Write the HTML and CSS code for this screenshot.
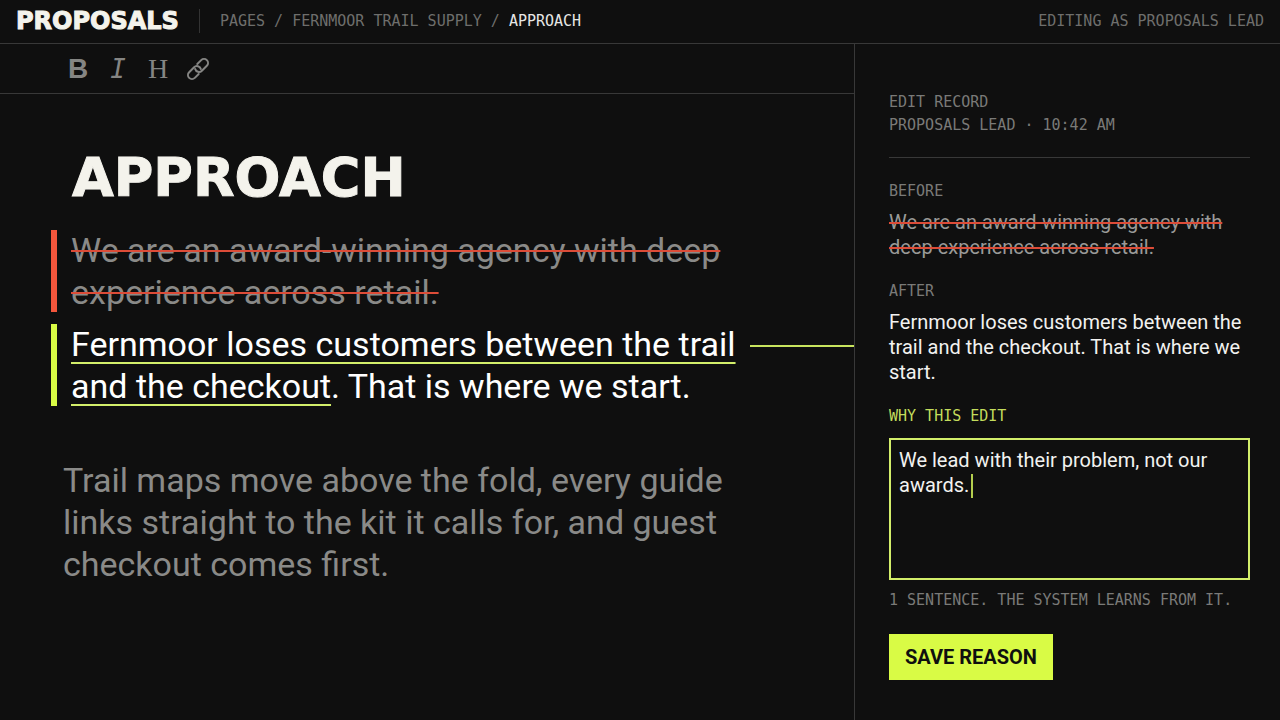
FILE: index.html
```html
<!DOCTYPE html>
<html lang="en">

<head>
    <meta charset="UTF-8">
    <meta name="viewport" content="width=device-width, initial-scale=1.0">
    <title>Proposals - Approach</title>

    <link rel="stylesheet" href="styles.css">
</head>

<body>
    <header class="topbar">
        <div class="brand">PROPOSALS</div>
        <nav class="crumbs">
            <a href="#">PAGES</a> / <a href="#">FERNMOOR TRAIL SUPPLY</a> / <a href="#" class="current">APPROACH</a>
        </nav>
        <div class="role">EDITING AS PROPOSALS LEAD</div>
    </header>

    <div class="workspace">
        <main class="editor">
            <div class="toolbar">
                <button type="button" class="tool bold" aria-label="Bold">B</button>
                <button type="button" class="tool italic" aria-label="Italic">I</button>
                <button type="button" class="tool heading" aria-label="Heading">H</button>
                <button type="button" class="tool" aria-label="Link">
                    <svg width="24" height="24" viewBox="0 0 24 24" fill="none" stroke="currentColor" stroke-width="2" stroke-linecap="round">
                        <g transform="rotate(-45 12 12)">
                            <path d="M9 16H3.500a4 4 0 0 1 0-8h7a4 4 0 0 1 3.500 6"/>
                            <path d="M15 8h5.500a4 4 0 0 1 0 8h-7a4 4 0 0 1-3.500-6"/>
                        </g>
                    </svg>
                </button>
            </div>

            <article class="page">
                <h1>APPROACH</h1>
                <div class="change removed">
                    <p><del>We are an award-winning agency with deep experience across retail.</del></p>
                </div>
                <div class="change added">
                    <p><ins>Fernmoor loses customers between the trail and the checkout</ins>. That is where we start.</p>
                    <span class="connector"></span>
                </div>
                <p class="rest">Trail maps move above the fold, every guide links straight to the kit it calls for, and guest checkout comes first.</p>
            </article>
        </main>

        <aside class="record">
            <div class="record-head">
                <div>EDIT RECORD</div>
                <div>PROPOSALS LEAD · 10:42 AM</div>
            </div>

            <h2>BEFORE</h2>
            <p class="before"><del>We are an award-winning agency with deep experience across retail.</del></p>

            <h2>AFTER</h2>
            <p class="after">Fernmoor loses customers between the trail and the checkout. That is where we start.</p>

            <form>
                <label for="reason">WHY THIS EDIT</label>
                <div class="reason-box">
                    <textarea id="reason" spellcheck="false">We lead with their problem, not our awards.</textarea>
                    <span class="caret"></span>
                </div>
                <div class="hint">1 SENTENCE. THE SYSTEM LEARNS FROM IT.</div>
                <button type="button" class="save">SAVE REASON</button>
            </form>
        </aside>
    </div>
</body>

</html>
```

FILE: styles.css
```css
* {
    box-sizing: border-box;
}

body {
    margin: 0;
    min-height: 100vh;
    display: flex;
    flex-direction: column;
    background-color: #0f0f0f;
    color: #f2f2f0;
    font-family: Roboto, sans-serif;
}

p,
h1,
h2 {
    margin: 0;
}

/* ==== top bar ==== */

.topbar {
    display: flex;
    align-items: center;
    height: 44px;
    padding: 0 16px 2px;
    border-bottom: 1px solid #383838;
    font-family: "DejaVu Sans Mono", monospace;
    font-size: 15px;
    color: #6e6e6c;
}

.brand {
    padding-right: 20px;
    border-right: 1px solid #333;
    font-family: "DejaVu Sans", sans-serif;
    font-size: 24px;
    font-weight: 700;
    line-height: 24px;
    color: #f4f3ec;
    -webkit-text-stroke: 1px #f4f3ec;
}

.crumbs {
    margin-left: 20px;
}

.crumbs a {
    color: inherit;
    text-decoration: none;
}

.crumbs .current {
    color: #e6e6e4;
}

.role {
    margin-left: auto;
}

/* ==== editor ==== */

.workspace {
    flex: 1;
    display: grid;
    grid-template-columns: minmax(0, 1fr) 426px;
}

.toolbar {
    display: flex;
    align-items: center;
    gap: 16px;
    height: 50px;
    padding-left: 66px;
    border-bottom: 1px solid #383838;
}

.tool {
    display: flex;
    align-items: center;
    justify-content: center;
    width: 24px;
    height: 32px;
    padding: 0;
    border: none;
    background: none;
    color: #858583;
    font-size: 28px;
    line-height: 32px;
    cursor: pointer;
}

.bold {
    font-family: "Liberation Sans", sans-serif;
    font-weight: 700;
}

.italic {
    font-family: "DejaVu Sans Mono", monospace;
    font-size: 26px;
    font-style: italic;
}

.heading {
    font-family: "Liberation Serif", serif;
}

.page {
    padding: 52px 0 40px 51px;
    font-size: 34px;
    line-height: 42px;
}

h1 {
    margin-bottom: 19px;
    padding-left: 21px;
    font-family: "DejaVu Sans", sans-serif;
    font-size: 54px;
    font-weight: 700;
    line-height: 64px;
    color: #f4f3ec;
    -webkit-text-stroke: 1px #f4f3ec;
}

.change {
    display: flex;
    position: relative;
    margin-bottom: 10px;
    padding-left: 20px;
}

.change::before {
    content: "";
    position: absolute;
    top: 1px;
    bottom: 1px;
    left: 0;
    width: 6px;
}

.change p {
    max-width: 679px;
}

.removed {
    color: #8a8a88;
}

.removed::before {
    background-color: #f4563c;
}

.added {
    color: #fff;
}

.added::before {
    background-color: #d9fb45;
}

del {
    text-decoration: line-through 2px #dc4c38;
}

ins {
    text-decoration: underline 2px #d3ee6a;
    text-underline-offset: 6px;
    text-decoration-skip-ink: none;
}

.connector {
    flex: 1;
    height: 2px;
    margin-top: 22px;
    background-color: #c8e45e;
}

.rest {
    max-width: 700px;
    margin-top: 52px;
    padding-left: 12px;
    color: #8a8a88;
}

/* ==== edit record ==== */

.record {
    padding: 47px 30px 40px 34px;
    border-left: 1px solid #383838;
    font-size: 20px;
    line-height: 25px;
}

.record-head,
.record h2,
.record label,
.hint {
    font-family: "DejaVu Sans Mono", monospace;
    font-size: 15px;
    font-weight: 400;
    line-height: 23px;
    color: #7a7a78;
}

.record-head {
    margin-bottom: 22px;
    padding-bottom: 20px;
    border-bottom: 1px solid #383838;
}

.record h2 {
    margin-bottom: 7px;
}

.before {
    margin-bottom: 20px;
    color: #9a9a98;
}

.after {
    margin-bottom: 20px;
}

.record label {
    display: block;
    margin-bottom: 10px;
    color: #c3dc5c;
}

.reason-box {
    position: relative;
}

textarea {
    display: block;
    width: 100%;
    height: 142px;
    padding: 8px;
    border: 2px solid #d3ee6a;
    border-radius: 0;
    outline: none;
    resize: none;
    background: none;
    color: #f2f2f0;
    font: inherit;
}

/* sits after the last word typed */
.caret {
    position: absolute;
    top: 36px;
    left: 82px;
    width: 2px;
    height: 24px;
    background-color: #b4ce4e;
}

.hint {
    margin: 9px 0 22px;
    white-space: nowrap;
}

.save {
    padding: 0 16px;
    border: none;
    background-color: #d9fb45;
    color: #0f0f0f;
    font-family: Roboto, sans-serif;
    font-size: 20px;
    font-weight: 700;
    line-height: 46px;
    cursor: pointer;
}
```
